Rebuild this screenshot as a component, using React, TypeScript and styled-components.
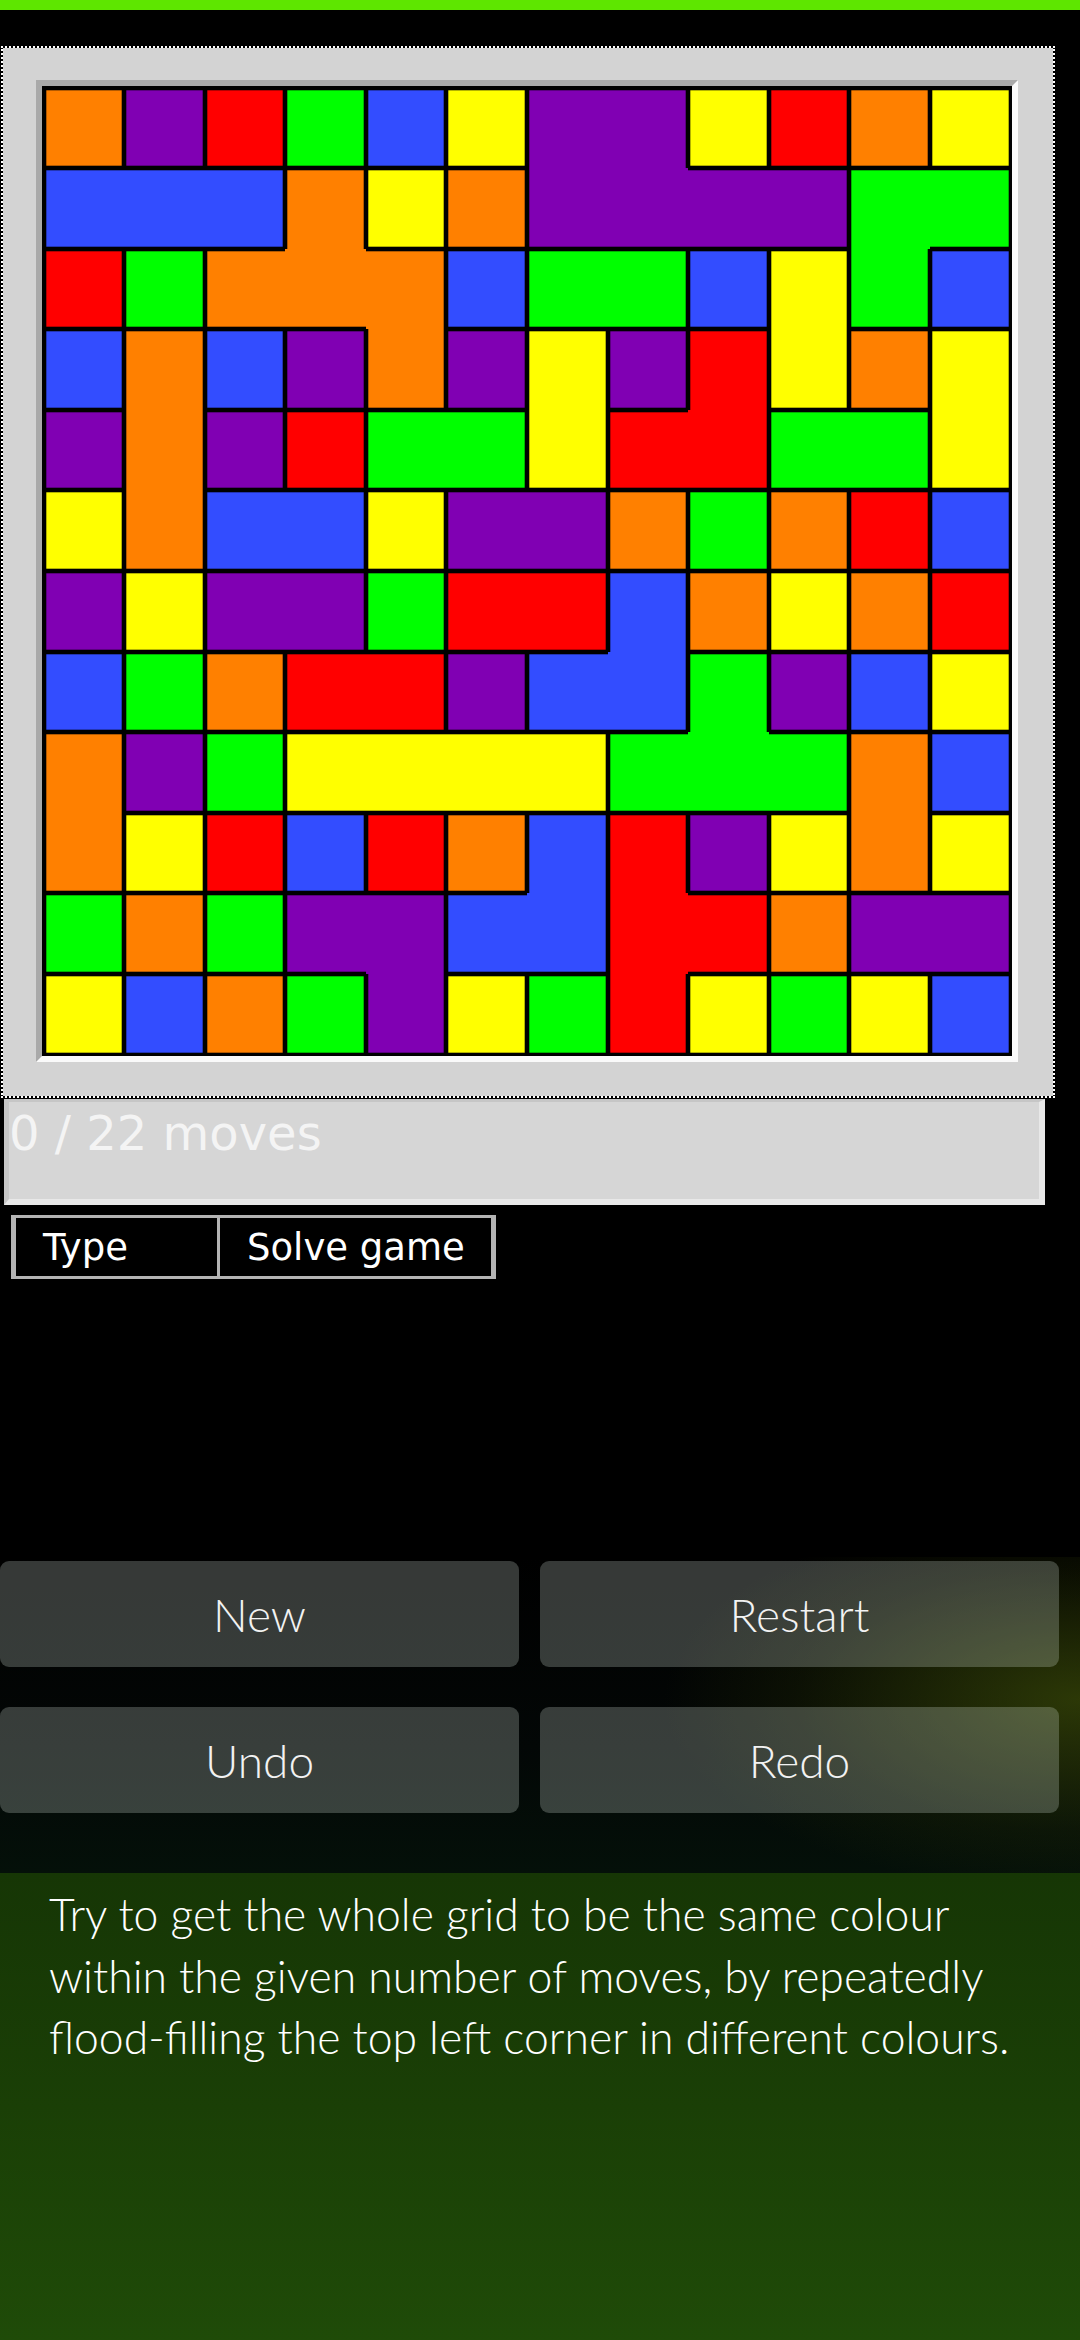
import styled, { createGlobalStyle } from "styled-components";

const GlobalStyle = createGlobalStyle`
  html, body {
    margin: 0;
    padding: 0;
    background: #000;
  }
  body {
    font-family: "DejaVu Sans", sans-serif;
  }
`;

const COLOURS: Record<string, string> = {
  O: "#ff8000",
  P: "#8000b3",
  R: "#ff0000",
  G: "#00ff00",
  B: "#334dff",
  Y: "#ffff00",
};

// the board as it stands at the start of the game
const ROWS = [
  "O P R G B Y P P Y R O Y",
  "B B B O Y O P P P P G G",
  "R G O O O B G G B Y G B",
  "B O B P O P Y P R Y O Y",
  "P O P R G G Y R R G G Y",
  "Y O B B Y P P O G O R B",
  "P Y P P G R R B O Y O R",
  "B G O R R P B B G P B Y",
  "O P G Y Y Y Y G G G O B",
  "O Y R B R O B R P Y O Y",
  "G O G P P B B R R O P P",
  "Y B O G P Y G R Y G Y B",
].map((row) => row.split(" "));

type Edges = { t: boolean; r: boolean; b: boolean; l: boolean };

function edgesOf(r: number, c: number): Edges {
  const v = ROWS[r][c];
  return {
    t: r === 0 || ROWS[r - 1][c] !== v,
    r: c === 11 || ROWS[r][c + 1] !== v,
    b: r === 11 || ROWS[r + 1][c] !== v,
    l: c === 0 || ROWS[r][c - 1] !== v,
  };
}

function shadow(e: Edges) {
  const lines: string[] = [];
  if (e.t) lines.push("inset 0 2px 0 #000");
  if (e.r) lines.push("inset -2px 0 0 #000");
  if (e.b) lines.push("inset 0 -2px 0 #000");
  if (e.l) lines.push("inset 2px 0 0 #000");
  if (e.t) lines.push("inset 0 3px 0 rgba(0,0,0,0.3)");
  if (e.r) lines.push("inset -3px 0 0 rgba(0,0,0,0.3)");
  if (e.b) lines.push("inset 0 -3px 0 rgba(0,0,0,0.3)");
  if (e.l) lines.push("inset 3px 0 0 rgba(0,0,0,0.3)");
  return lines.length ? lines.join(", ") : "none";
}

function App() {
  return (
    <>
      <GlobalStyle />
      <Page>
        <TopBar />
        <Frame>
          <Bevel>
            <Board>
              {ROWS.map((row, r) =>
                row.map((v, c) => (
                  <Cell key={`${r}-${c}`} $colour={COLOURS[v]} $edges={edgesOf(r, c)} />
                ))
              )}
            </Board>
          </Bevel>
        </Frame>
        <MovesBox>0 / 22 moves</MovesBox>
        <TypeRow>
          <TypeCell $width={201}>Type</TypeCell>
          <TypeCell $width={274}>Solve game</TypeCell>
        </TypeRow>
        <ButtonPanel>
          <Button>New</Button>
          <Button>Restart</Button>
          <Button>Undo</Button>
          <Button>Redo</Button>
        </ButtonPanel>
        <Help>
          Try to get the whole grid to be the same colour
          <br />
          within the given number of moves, by repeatedly
          <br />
          flood-filling the top left corner in different colours.
        </Help>
      </Page>
    </>
  );
}

export default App;

const Page = styled.div`
  width: 1080px;
  min-height: 2340px;
  display: flex;
  flex-direction: column;
  background: #000;
`;

const TopBar = styled.div`
  height: 10px;
  background: #5ee600;
`;

const Frame = styled.div`
  align-self: flex-start;
  margin: 36px 0 0 1px;
  padding: 32px 35px 34px 33px;
  border: 2px dotted #fff;
  background: #d3d3d3;
  background-clip: padding-box;
`;

const Bevel = styled.div`
  border: 6px solid;
  border-color: #a9a9a9 #fafafa #fafafa #a9a9a9;
`;

const Board = styled.div`
  width: 970px;
  height: 970px;
  box-sizing: border-box;
  padding: 1.5px;
  background: #000;
  display: grid;
  grid-template-columns: repeat(12, 1fr);
  grid-template-rows: repeat(12, 1fr);
`;

const Cell = styled.div<{ $colour: string; $edges: Edges }>`
  background: ${(p) => p.$colour};
  box-shadow: ${(p) => shadow(p.$edges)};
`;

const MovesBox = styled.div`
  margin: 1px 0 0 4px;
  width: 1041px;
  height: 106px;
  box-sizing: border-box;
  padding-top: 3px;
  border-style: solid;
  border-width: 3px 6px 6px 5px;
  border-color: #c6c6c6 #e8e8e8 #e8e8e8 #c6c6c6;
  background: #d6d6d6;
  color: #f4f4f4;
  font-family: "DejaVu Sans", sans-serif;
  font-size: 48px;
`;

const TypeRow = styled.div`
  align-self: flex-start;
  display: flex;
  margin: 10px 0 0 11px;
  height: 64px;
  box-sizing: border-box;
  border: 3px solid #b4b4b4;
  border-left-width: 5px;
  border-right-width: 5px;
  background: #000;
`;

const TypeCell = styled.div<{ $width: number }>`
  width: ${(p) => p.$width}px;
  box-sizing: border-box;
  padding-left: 27px;
  display: flex;
  align-items: center;
  color: #fff;
  font-family: "DejaVu Sans", sans-serif;
  font-size: 37px;

  & + & {
    border-left: 3px solid #b4b4b4;
  }
`;

const ButtonPanel = styled.div`
  margin-top: 278px;
  height: 316px;
  box-sizing: border-box;
  padding: 4px 21px 0 0;
  display: grid;
  grid-template-columns: 1fr 1fr;
  grid-auto-rows: 106px;
  column-gap: 21px;
  row-gap: 40px;
  align-content: start;
  background:
    radial-gradient(ellipse 520px 240px at 100% 45%, rgba(72, 90, 8, 0.6), rgba(40, 50, 5, 0.25) 55%, transparent 80%),
    linear-gradient(to bottom, #000 0%, #030706 60%, #041009 100%);
`;

const Button = styled.div`
  display: flex;
  align-items: center;
  justify-content: center;
  border-radius: 9px;
  background: rgba(215, 228, 220, 0.25);
  color: #f2f2f2;
  font-family: Lato, "Open Sans", sans-serif;
  font-weight: 300;
  font-size: 46px;
`;

const Help = styled.div`
  flex: 1;
  padding: 10px 30px 0 49px;
  background: linear-gradient(to bottom, #163605 0%, #1a3f06 50%, #1f4b08 100%);
  color: #fff;
  font-family: Lato, "Open Sans", sans-serif;
  font-weight: 300;
  font-size: 44.5px;
  line-height: 61.7px;
`;
